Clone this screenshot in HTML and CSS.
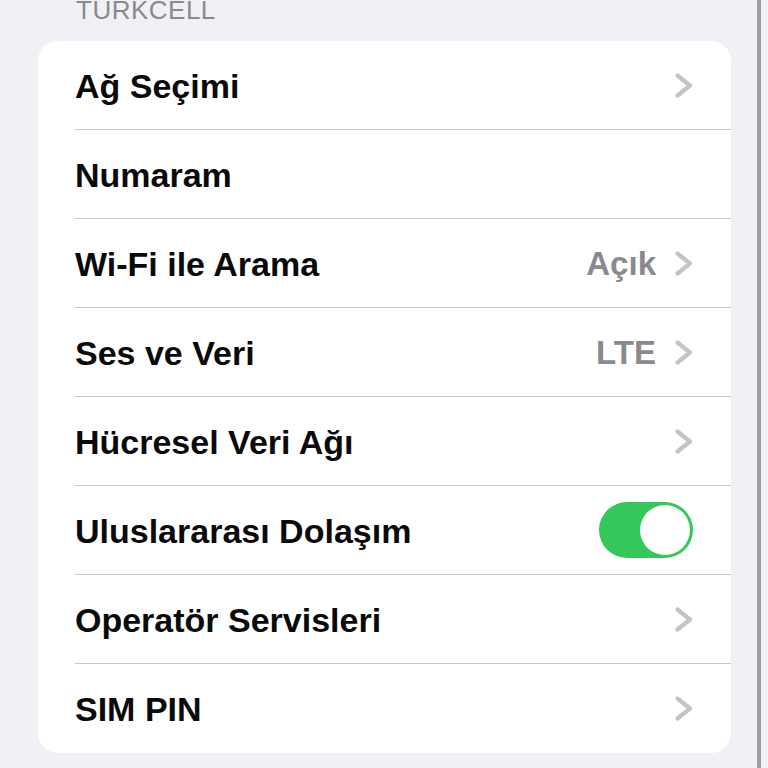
FILE: index.html
```html
<!DOCTYPE html>
<html lang="tr">
<head>
<meta charset="utf-8">
<title>Turkcell</title>
<link rel="stylesheet" href="styles.css">
</head>
<body>
<div class="screen">
  <div class="section-header">TURKCELL</div>
  <div class="card">
    <div class="row"><div class="row-inner"><span class="label">Ağ Seçimi</span><span class="right"><svg class="chev" viewBox="0 0 18 25" width="18" height="25"><polyline points="2.5,2.5 15,12.5 2.5,22.5"/></svg></span></div></div>
    <div class="row"><div class="row-inner"><span class="label">Numaram</span></div></div>
    <div class="row"><div class="row-inner"><span class="label">Wi-Fi ile Arama</span><span class="right"><span class="value">Açık</span><svg class="chev" viewBox="0 0 18 25" width="18" height="25"><polyline points="2.5,2.5 15,12.5 2.5,22.5"/></svg></span></div></div>
    <div class="row"><div class="row-inner"><span class="label">Ses ve Veri</span><span class="right"><span class="value">LTE</span><svg class="chev" viewBox="0 0 18 25" width="18" height="25"><polyline points="2.5,2.5 15,12.5 2.5,22.5"/></svg></span></div></div>
    <div class="row"><div class="row-inner"><span class="label">Hücresel Veri Ağı</span><span class="right"><svg class="chev" viewBox="0 0 18 25" width="18" height="25"><polyline points="2.5,2.5 15,12.5 2.5,22.5"/></svg></span></div></div>
    <div class="row"><div class="row-inner toggle-row"><span class="label">Uluslararası Dolaşım</span><span class="toggle"><span class="knob"></span></span></div></div>
    <div class="row"><div class="row-inner"><span class="label">Operatör Servisleri</span><span class="right"><svg class="chev" viewBox="0 0 18 25" width="18" height="25"><polyline points="2.5,2.5 15,12.5 2.5,22.5"/></svg></span></div></div>
    <div class="row last"><div class="row-inner"><span class="label">SIM PIN</span><span class="right"><svg class="chev" viewBox="0 0 18 25" width="18" height="25"><polyline points="2.5,2.5 15,12.5 2.5,22.5"/></svg></span></div></div>
  </div>
</div>
</body>
</html>
```
FILE: styles.css
```css
html, body {
  margin: 0;
  padding: 0;
  background: #f0f0f5;
  height: 768px;
  overflow: hidden;
}
body {
  font-family: "Liberation Sans", Arial, sans-serif;
}
.screen {
  width: 757px;
  height: 768px;
  border-right: 4px solid #9d9da2;
  box-sizing: content-box;
}
.section-header {
  height: 41px;
  padding-left: 76px;
  font-size: 26px;
  line-height: 20px;
  color: #8a8a8e;
  letter-spacing: 0.5px;
}
.card {
  margin-left: 38px;
  width: 693px;
  background: #fff;
  border-radius: 20px;
  overflow: hidden;
}
.row {
  padding-left: 37px;
}
.row-inner {
  height: 88px;
  border-bottom: 1px solid #c8c8cc;
  display: flex;
  align-items: center;
  justify-content: space-between;
  padding-right: 38px;
}
.row.last .row-inner {
  height: 89px;
  border-bottom: none;
}
.label {
  font-size: 34px;
  font-weight: 700;
  color: #0a0a0a;
  padding-top: 2px;
}
.right {
  display: flex;
  align-items: center;
}
.value {
  font-size: 33px;
  font-weight: 700;
  color: #8a8a8e;
  margin-right: 19px;
  padding-top: 2px;
}
.chev {
  display: block;
}
.chev polyline {
  fill: none;
  stroke: #c4c4c7;
  stroke-width: 4.2;
  stroke-linecap: round;
  stroke-linejoin: round;
}
.toggle-row {
  padding-right: 38px;
}
.toggle {
  width: 94px;
  height: 56px;
  border-radius: 28px;
  background: #34c759;
  display: flex;
  justify-content: flex-end;
  align-items: center;
  padding: 3px;
  box-sizing: border-box;
}
.knob {
  width: 50px;
  height: 50px;
  border-radius: 50%;
  background: #fff;
}
```
